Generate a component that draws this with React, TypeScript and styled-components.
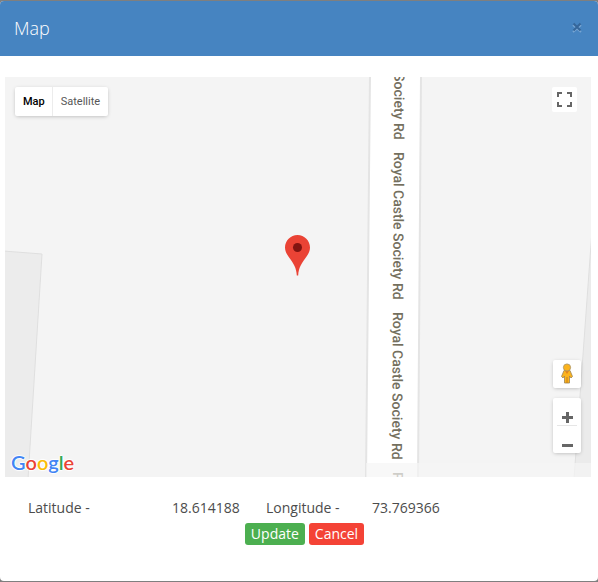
import React from "react";
import styled, { createGlobalStyle } from "styled-components";

const GlobalStyle = createGlobalStyle`
  *, *::before, *::after { box-sizing: border-box; }
  html, body, #root { height: 100%; }
  body {
    margin: 0;
    background: #7f7f7f;
    font-family: "Open Sans", sans-serif;
    font-size: 14px;
    line-height: 20px;
    color: #4c4c4c;
  }
  button { font: inherit; border: 0; cursor: pointer; }
`;

const Backdrop = styled.div`
  min-height: 100%;
  padding: 1px 0;
  display: flex;
`;

const Dialog = styled.section`
  flex: 1;
  min-width: 0;
  background: #fff;
  border-radius: 4px;
  overflow: hidden;
`;

const Header = styled.header`
  display: flex;
  justify-content: space-between;
  align-items: center;
  height: 55px;
  padding: 0 15px 2px 14px;
  background: #4684c1;
`;

const Title = styled.h4`
  margin: 0;
  font-size: 18px;
  font-weight: 300;
  line-height: 24px;
  color: #fff;
`;

const CloseButton = styled.button`
  display: grid;
  place-items: center;
  width: 12px;
  height: 16px;
  padding: 0;
  background: transparent;
`;

const Body = styled.div`
  padding: 21px 7px 0 5px;
`;

const MapPane = styled.div`
  position: relative;
  height: 400px;
  overflow: hidden;
  background: #f4f4f4;
`;

const MapDrawing = styled.svg`
  display: block;
  width: 100%;
  height: 100%;
`;

const RoadLabel = styled.text`
  font-family: Roboto, sans-serif;
  font-size: 14px;
  font-weight: 500;
  fill: #746f5e;
`;

const TypeSwitch = styled.div`
  position: absolute;
  top: 10px;
  left: 10px;
  display: flex;
  border-radius: 2px;
  background: #fff;
  box-shadow: 0 1px 4px -1px rgba(0, 0, 0, 0.3);
`;

const TypeButton = styled.button<{ $active?: boolean }>`
  height: 29px;
  padding: ${(p) => (p.$active ? "0 7px 0 8px" : "0 8px")};
  background: transparent;
  font-family: Roboto, sans-serif;
  font-size: 11px;
  font-weight: ${(p) => (p.$active ? 500 : 400)};
  color: ${(p) => (p.$active ? "#000" : "#565656")};

  & + & { border-left: 1px solid #ececec; }
`;

const FullscreenButton = styled.button`
  position: absolute;
  top: 10px;
  right: 14px;
  width: 25px;
  height: 25px;
  padding: 5px;
  background: #fff;
  border-radius: 2px;
  svg { display: block; }
`;

const MarkerPin = styled.svg`
  position: absolute;
  left: 50%;
  bottom: 50%;
  transform: translateX(-50%);
`;

const SideControls = styled.div`
  position: absolute;
  right: 10px;
  bottom: 24px;
  display: flex;
  flex-direction: column;
  gap: 10px;
`;

const ControlCard = styled.div`
  width: 28px;
  background: #fff;
  border-radius: 2px;
  box-shadow: 0 1px 4px -1px rgba(0, 0, 0, 0.3);
`;

const ControlButton = styled.button<{ $height: number }>`
  display: grid;
  place-items: center;
  width: 28px;
  height: ${(p) => p.$height}px;
  padding: ${(p) => (p.$height === 28 ? "0 0 2px" : "11px 0 0")};
  background: transparent;
`;

const Divider = styled.hr`
  height: 1px;
  margin: 0 4px;
  border: 0;
  background: #e6e6e6;
`;

const Logo = styled.a`
  position: absolute;
  left: 6px;
  bottom: 3px;
  font-family: Lato, sans-serif;
  font-size: 20px;
  font-weight: 600;
  line-height: 24px;
  text-decoration: none;
  text-shadow: 0 0 1px #fff, 1px 0 1px #fff, -1px 0 1px #fff, 0 1px 1px #fff, 0 -1px 1px #fff;
`;

const Letter = styled.span<{ $color: string }>`
  color: ${(p) => p.$color};
`;

const Coordinates = styled.dl`
  display: grid;
  grid-template-columns: 144px 94px 106px 1fr;
  margin: 0;
  padding: 21px 0 0 23px;
`;

const Term = styled.dt``;

const Value = styled.dd`
  margin: 0;
`;

const Actions = styled.div`
  display: flex;
  justify-content: center;
  gap: 4px;
  padding: 5px 0 0 13px;
`;

const ActionButton = styled.button<{ $color: string }>`
  height: 22px;
  padding: 0 6px;
  border-radius: 3px;
  background: ${(p) => p.$color};
  color: #fff;
  line-height: 20px;
`;

const logoLetters = [
  ["G", "#4285f4"],
  ["o", "#ea4335"],
  ["o", "#fbbc05"],
  ["g", "#4285f4"],
  ["l", "#34a853"],
  ["e", "#ea4335"],
];

const roadLabels = [
  { x: 390, y: -85 },
  { x: 389, y: 75 },
  { x: 388, y: 235 },
  { x: 388, y: 395 },
];

function StreetMap() {
  return (
    <MapDrawing viewBox="0 0 586 400" preserveAspectRatio="xMidYMid slice" aria-label="Street map">
      <rect width="586" height="400" fill="#f4f4f4" />
      <path d="M-2 174 37 177 23 402H-2Z" fill="#ececec" stroke="#dfdfdf" />
      <path d="M588 140 569 402H588Z" fill="#ebebeb" stroke="#dfdfdf" />
      <path d="M365-2H416L413 402H361Z" fill="#fff" stroke="#e4e4e4" strokeWidth="2" />
      {roadLabels.map((p) => (
        <RoadLabel key={p.y} transform={`translate(${p.x} ${p.y}) rotate(90.4)`}>
          Royal Castle Society Rd
        </RoadLabel>
      ))}
      <rect x="361" y="386" width="225" height="14" fill="#f5f5f5" opacity="0.7" />
    </MapDrawing>
  );
}

export default function App() {
  return (
    <>
      <GlobalStyle />
      <Backdrop>
        <Dialog role="dialog" aria-labelledby="dialog-title">
          <Header>
            <Title id="dialog-title">Map</Title>
            <CloseButton aria-label="Close">
              <svg width="10" height="11" viewBox="0 0 10 11" fill="none" strokeWidth="2">
                <path d="M1 3 9 10M9 3 1 10" stroke="#77a5d3" />
                <path d="M1.5 1.5 8.5 8.5M8.5 1.5 1.5 8.5" stroke="#35669a" />
              </svg>
            </CloseButton>
          </Header>
          <Body>
            <MapPane>
              <StreetMap />
              <TypeSwitch>
                <TypeButton $active>Map</TypeButton>
                <TypeButton>Satellite</TypeButton>
              </TypeSwitch>
              <FullscreenButton aria-label="Toggle fullscreen">
                <svg width="15" height="15" viewBox="0 0 15 15" fill="none" stroke="#666" strokeWidth="2">
                  <path d="M1 5V1H5M10 1H14V5M14 10V14H10M5 14H1V10" />
                </svg>
              </FullscreenButton>
              <MarkerPin width="26" height="42" viewBox="0 0 26 42" aria-label="Selected location">
                <path
                  d="M12.500 0C5.600 0 0 5.600 0 12.500c0 4 2 7 4.500 10.500C8.500 28.500 11.500 33 11.800 40.500h1.400C13.500 33 16.500 28.500 20.500 23 23 19.500 25 16.500 25 12.500 25 5.600 19.400 0 12.500 0Z"
                  fill="#ea4335"
                />
                <circle cx="12.500" cy="12.500" r="4.500" fill="#811411" />
              </MarkerPin>
              <SideControls>
                <ControlCard>
                  <ControlButton $height={28} aria-label="Street View">
                    <svg width="14" height="21" viewBox="0 0 14 21">
                      <path
                        d="M4 7.500h6l2.500 6-1.500 1.500-1.500-2V20h-5v-7L3 15l-1.500-1.500Z"
                        fill="#fbb31c"
                        stroke="#9a8458"
                        strokeWidth="0.800"
                      />
                      <path d="M5 8h4L7 11Z" fill="#e3801a" />
                      <path d="M7 14v6" stroke="#c97f16" />
                      <circle cx="7" cy="4.500" r="3.600" fill="#fbb31c" stroke="#a79265" strokeWidth="0.800" />
                    </svg>
                  </ControlButton>
                </ControlCard>
                <ControlCard>
                  <ControlButton $height={27} aria-label="Zoom in">
                    <svg width="11" height="11" viewBox="0 0 11 11" stroke="#666" strokeWidth="3">
                      <path d="M0 5.500H11M5.500 0V11" />
                    </svg>
                  </ControlButton>
                  <Divider />
                  <ControlButton $height={27} aria-label="Zoom out">
                    <svg width="11" height="3" viewBox="0 0 11 3">
                      <rect width="11" height="3" fill="#666" />
                    </svg>
                  </ControlButton>
                </ControlCard>
              </SideControls>
              <Logo href="#google" aria-label="Google">
                {logoLetters.map(([char, color], i) => (
                  <Letter key={i} $color={color}>
                    {char}
                  </Letter>
                ))}
              </Logo>
            </MapPane>
            <Coordinates>
              <Term>Latitude -</Term>
              <Value>18.614188</Value>
              <Term>Longitude -</Term>
              <Value>73.769366</Value>
            </Coordinates>
            <Actions>
              <ActionButton $color="#4caf50">Update</ActionButton>
              <ActionButton $color="#f44336">Cancel</ActionButton>
            </Actions>
          </Body>
        </Dialog>
      </Backdrop>
    </>
  );
}
